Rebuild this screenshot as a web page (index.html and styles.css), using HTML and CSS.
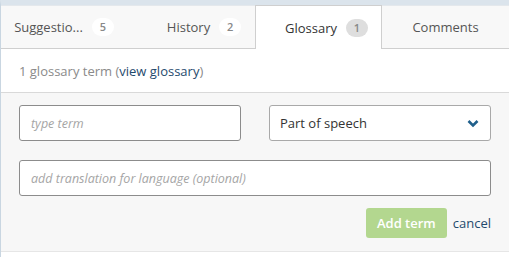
FILE: index.html
```html
<!DOCTYPE html>
<html lang="en">
<head>
    <meta charset="UTF-8">
    <title>Glossary</title>
    <link rel="stylesheet" href="styles.css">
</head>
<body>
    <div class="panel">
        <div class="tabs">
            <div class="tab">
                <span class="tab-label">Suggestio...</span>
                <span class="badge">5</span>
            </div>
            <div class="tab tab-history">
                <span class="tab-label">History</span>
                <span class="badge">2</span>
            </div>
            <div class="tab active">
                <span class="tab-label">Glossary</span>
                <span class="badge">1</span>
            </div>
            <div class="tab">
                <span class="tab-label">Comments</span>
            </div>
        </div>

        <div class="summary">
            1 glossary term (<a href="#">view glossary</a>)
        </div>

        <div class="glossary-form">
            <div class="form-row">
                <input class="field" type="text" placeholder="type term">
                <div class="select">
                    <span>Part of speech</span>
                    <svg class="chevron" width="12" height="9" viewBox="0 0 12 9">
                        <path d="M1.5 2 L6 6.5 L10.5 2" fill="none" stroke="#1f5f8b" stroke-width="2.6"/>
                    </svg>
                </div>
            </div>
            <div class="form-row">
                <input class="field wide" type="text" placeholder="add translation for language (optional)">
            </div>
            <div class="form-actions">
                <button class="btn-add" disabled>Add term</button>
                <a href="#" class="cancel">cancel</a>
            </div>
        </div>
    </div>
</body>
</html>
```

FILE: styles.css
```css
body {
    margin: 0;
    font-family: "Open Sans", "Liberation Sans", sans-serif;
    background: white;
}
.panel {
    width: 509px;
    height: 257px;
    border-top: 5px solid #dbe4ec;
    border-left: 1px solid #c9d6e1;
    box-sizing: border-box;
}
.tabs {
    display: grid;
    grid-template-columns: 126px 128px 127px 127px;
    height: 44px;
}
.tab {
    display: flex;
    align-items: center;
    justify-content: center;
    gap: 9px;
    box-sizing: border-box;
    background: #f8f8f8;
    border-bottom: 1px solid #cfcfcf;
    border-top: 1px solid #e4e8ec;
    font-size: 13px;
    color: #555;
}
.tab-history {
    padding-left: 26px;
}
.tab.active {
    background: white;
    color: #333;
    border: 1px solid #cfcfcf;
    border-bottom: none;
    padding-left: 16px;
}
.tab.active .badge {
    background: #dedede;
}
.badge {
    display: inline-block;
    min-width: 22px;
    height: 18px;
    line-height: 18px;
    border-radius: 9px;
    background: white;
    text-align: center;
    font-size: 11px;
    font-weight: 600;
    color: #888;
}
.summary {
    height: 43px;
    display: flex;
    align-items: center;
    padding-left: 18px;
    border-bottom: 1px solid #d9d9d9;
    font-size: 13px;
    color: #8a8a8a;
}
.summary a {
    color: #1f4a6d;
    text-decoration: none;
}
.glossary-form {
    background: #f7f7f7;
    padding: 12px 18px 13px 18px;
    border-bottom: 1px solid #e6e6e6;
}
.form-row {
    display: flex;
    justify-content: space-between;
    margin-bottom: 19px;
}
.field {
    width: 222px;
    height: 36px;
    box-sizing: border-box;
    border: 1px solid #8c8c8c;
    border-radius: 3px;
    padding: 0 11px;
    font-family: inherit;
    font-size: 12.5px;
    background: white;
}
.field::placeholder {
    font-style: italic;
    color: #a5a5a5;
}
.field.wide {
    width: 472px;
}
.select {
    width: 222px;
    height: 36px;
    box-sizing: border-box;
    border: 1px solid #a9a9a9;
    border-radius: 3px;
    padding: 0 11px 0 10px;
    display: flex;
    align-items: center;
    justify-content: space-between;
    background: white;
    font-size: 13px;
    color: #333;
}
.form-actions {
    display: flex;
    justify-content: flex-end;
    align-items: center;
    gap: 6px;
    margin-top: -7px;
}
.btn-add {
    background: #b3d78f;
    color: white;
    border: none;
    border-radius: 3px;
    height: 30px;
    padding: 0 11px;
    font-family: inherit;
    font-size: 13px;
    font-weight: 600;
}
.cancel {
    color: #1f4a6d;
    text-decoration: none;
    font-size: 13px;
}
```
